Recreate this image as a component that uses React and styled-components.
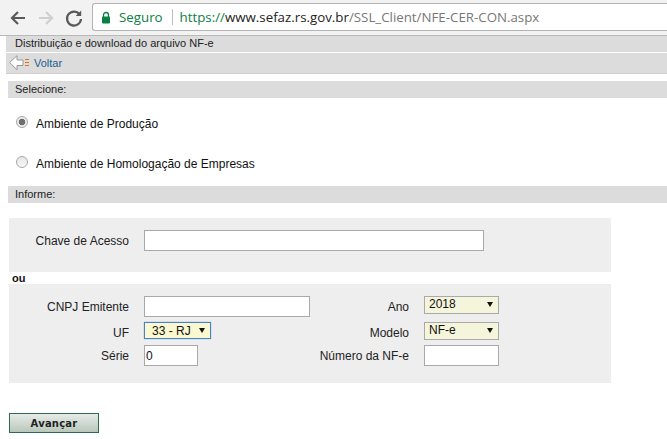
import React from "react";
import styled, { createGlobalStyle } from "styled-components";

const Global = createGlobalStyle`
  html, body { margin: 0; padding: 0; background: #fff; overflow: hidden; }
  body { font-family: "Liberation Sans", Arial, sans-serif; font-size: 12px; color: #111; }
`;
const Page = styled.div`width: 667px; height: 439px; overflow: hidden; display: flex; flex-direction: column;`;
const Chrome = styled.div`
  height: 36px; flex: none; box-sizing: border-box; background: #f2f2f2; border-bottom: 1px solid #b9b9b9;
  display: flex; align-items: flex-start; padding: 3px 0 0 8px;
`;
const NavGroup = styled.div`display: flex; width: 84px; flex: none; gap: 8px;`;
const NavIcon = styled.svg`width: 20px; height: 20px; margin-top: 5px; flex: none;`;
const Omnibox = styled.div`
  flex: 1; height: 28px; box-sizing: border-box; background: #fff; border: 1px solid #b4b4b4; border-right: 0;
  border-radius: 3px 0 0 3px; display: flex; align-items: center; padding-left: 8px;
  font-family: "Open Sans", "Noto Sans", sans-serif; font-size: 13.3px; white-space: nowrap;
`;
const Secure = styled.span`color: #0b8043; margin-left: 8px;`;
const Divider = styled.span`width: 1px; height: 16px; background: #bdbdbd; margin: 0 7px 0 9px;`;
const Host = styled.span`color: #222;`;
const Scheme = styled.span`color: #0b8043;`;
const Path = styled.span`color: #777;`;

const Body = styled.div`display: flex; flex-direction: column;`;
const TitleBar = styled.div`
  margin-left: 6px; height: 16px; background: #dcdcdc; font-size: 11px; line-height: 15px; padding-left: 9px; color: #222;
`;
const BackBar = styled.div`
  margin: 1px 0 0 6px; height: 21px; box-sizing: border-box; background: #dcdcdc; border-bottom: 1px solid #cfcfcf;
  display: flex; align-items: center; padding-left: 3px; font-size: 11px; color: #1b5e8c; gap: 4px;
`;
const SectionBar = styled.div`
  margin: ${p => p.$top}px 0 0 8px; height: 17px; background: #dcdcdc; font-size: 11px; line-height: 16px; padding-left: 7px; color: #222;
`;
const RadioRow = styled.label`
  display: flex; align-items: center; height: 14px; margin: ${p => p.$top}px 0 0 16px; font-size: 12px; color: #111;
`;
const RadioDot = styled.span`
  width: 12px; height: 12px; border-radius: 50%; box-sizing: border-box; border: 1px solid #a9a9a9; flex: none;
  background: ${p => p.$on ? "radial-gradient(circle, #6f6f6f 0 3px, #ececec 3.6px)" : "linear-gradient(#e6e6e6, #f8f8f8)"};
  margin: -4px 8px 0 0;
`;
const KeyPanel = styled.div`
  margin: 15px 0 0 9px; width: 602px; height: 54px; box-sizing: border-box; background: #eee; padding-top: 12px;
  display: grid; grid-template-columns: 120px 340px; column-gap: 15px; align-items: start;
`;
const Or = styled.div`margin-left: 12px; height: 12px; font-size: 11px; font-weight: bold; line-height: 13px; color: #111;`;
const FieldPanel = styled.div`
  margin-left: 9px; width: 602px; height: 99px; box-sizing: border-box; background: #eee; padding-top: 12px;
  display: grid; grid-template-columns: 120px 166px 84px 75px; grid-template-rows: 21px 18px 21px; column-gap: 15px; row-gap: 5px; align-items: start;
`;
const Label = styled.div`justify-self: end; font-size: 12px; line-height: 23px; height: 21px; color: #222; white-space: nowrap;`;
const TextBox = styled.input`
  display: block; box-sizing: border-box; width: ${p => p.$w}; height: 21px; border: 1px solid #a9a9a9; background: #fff;
  padding: 0 1px; margin: 0; font: 12px "Liberation Sans", Arial, sans-serif; color: #111; outline: none; border-radius: 0;
`;
const SelectWrap = styled.div`
  position: relative; width: ${p => p.$w}px; height: ${p => p.$h}px;
  &::after {
    content: ""; position: absolute; right: ${p => p.$arrow}px; top: 6px; pointer-events: none;
    border-left: 3px solid transparent; border-right: 3px solid transparent; border-top: 5px solid #111;
  }
`;
const Select = styled.select`
  appearance: none; display: block; width: 100%; height: 100%; box-sizing: border-box; margin: 0; outline: none; border-radius: 0;
  border: ${p => p.$focus ? "1px solid #4a83c4" : "1px solid #a9a9a9"}; box-shadow: ${p => p.$focus ? "0 0 1px 0 #5b9bd5" : "none"};
  background: ${p => p.$focus ? "#fbf8cf" : "#f5f5dc"}; padding: 0 0 ${p => p.$focus ? 0 : 2}px ${p => p.$focus ? 7 : 4}px;
  font: 12px "Liberation Sans", Arial, sans-serif; color: #111;
`;
const Footer = styled.div`margin: 30px 0 0 9px;`;
const Submit = styled.button`
  display: block; width: 90px; height: 20px; box-sizing: border-box; border: 1px solid #2f6b4f; border-radius: 0; padding: 0;
  background: linear-gradient(#e6ece6, #b9c7bb); font: bold 10px "DejaVu Sans", Verdana, sans-serif; color: #222; letter-spacing: 0.02em;
`;

export default function App() {
  return (
    <Page>
      <Global />
      <Chrome>
        <NavGroup>
          <NavIcon viewBox="0 0 20 20" fill="none" stroke="#5a5a5a" strokeWidth="2.2"><path d="M17 10H4M10 4l-6 6 6 6" /></NavIcon>
          <NavIcon viewBox="0 0 20 20" fill="none" stroke="#cfcfcf" strokeWidth="2.2"><path d="M3 10h13M10 4l6 6-6 6" /></NavIcon>
          <NavIcon viewBox="0 0 20 20" fill="none" stroke="#5a5a5a" strokeWidth="2.2"><path d="M15.5 6.2A7 7 0 1 0 17 11" /><path d="M17.2 2.6v5.5h-5.5z" fill="#5a5a5a" stroke="none" /></NavIcon>
        </NavGroup>
        <Omnibox>
          <svg width="10" height="13" viewBox="0 0 10 13"><path d="M2.5 6V4a2.5 2.5 0 0 1 5 0v2" fill="none" stroke="#0b8043" strokeWidth="1.3" /><rect x="1" y="5.5" width="8" height="7" rx="1" fill="#0b8043" /></svg>
          <Secure>Seguro</Secure>
          <Divider />
          <span><Scheme>https://</Scheme><Host>www.sefaz.rs.gov.br</Host><Path>/SSL_Client/NFE-CER-CON.aspx</Path></span>
        </Omnibox>
      </Chrome>
      <Body>
        <TitleBar>Distribuição e download do arquivo NF-e</TitleBar>
        <BackBar>
          <svg width="21" height="16" viewBox="0 0 21 16">
            <path d="M0.7 7.5L8 0.7V5h6v5.5H8v4.3z" fill="#fff" stroke="#9a9a9a" strokeWidth="1" />
            <path d="M16 4.5h4M16 7.5h4M16 10.5h4" stroke="#e2701c" strokeWidth="1" />
          </svg>
          Voltar
        </BackBar>
        <SectionBar $top={7}>Selecione:</SectionBar>
        <RadioRow $top={19}><RadioDot $on />Ambiente de Produção</RadioRow>
        <RadioRow $top={26}><RadioDot />Ambiente de Homologação de Empresas</RadioRow>
        <SectionBar $top={15}>Informe:</SectionBar>
        <KeyPanel>
          <Label>Chave de Acesso</Label>
          <TextBox $w="340px" />
        </KeyPanel>
        <Or>ou</Or>
        <FieldPanel>
          <Label>CNPJ Emitente</Label>
          <TextBox $w="166px" />
          <Label>Ano</Label>
          <SelectWrap $w={75} $h={18} $arrow={6}><Select defaultValue="2018"><option>2018</option></Select></SelectWrap>
          <Label>UF</Label>
          <SelectWrap $w={67} $h={17} $arrow={6}><Select $focus defaultValue="33 - RJ"><option>33 - RJ</option></Select></SelectWrap>
          <Label>Modelo</Label>
          <SelectWrap $w={75} $h={18} $arrow={6}><Select defaultValue="NF-e"><option>NF-e</option></Select></SelectWrap>
          <Label>Série</Label>
          <TextBox $w="54px" defaultValue="0" />
          <Label>Número da NF-e</Label>
          <TextBox $w="75px" />
        </FieldPanel>
        <Footer><Submit>Avançar</Submit></Footer>
      </Body>
    </Page>
  );
}
